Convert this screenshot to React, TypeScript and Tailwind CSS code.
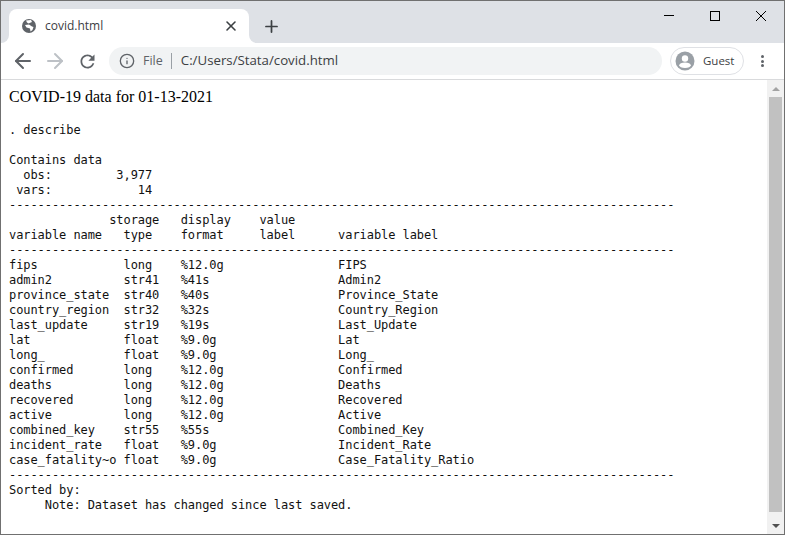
import { X, Plus, ArrowLeft, ArrowRight, Info } from 'lucide-react';

const dashes = '-'.repeat(93);

const output = `. describe

Contains data
  obs:         3,977
 vars:            14
${dashes}
              storage   display    value
variable name   type    format     label      variable label
${dashes}
fips            long    %12.0g                FIPS
admin2          str41   %41s                  Admin2
province_state  str40   %40s                  Province_State
country_region  str32   %32s                  Country_Region
last_update     str19   %19s                  Last_Update
lat             float   %9.0g                 Lat
long_           float   %9.0g                 Long_
confirmed       long    %12.0g                Confirmed
deaths          long    %12.0g                Deaths
recovered       long    %12.0g                Recovered
active          long    %12.0g                Active
combined_key    str55   %55s                  Combined_Key
incident_rate   float   %9.0g                 Incident_Rate
case_fatality~o float   %9.0g                 Case_Fatality_Ratio
${dashes}
Sorted by:
     Note: Dataset has changed since last saved.`;

function GlobeIcon() {
  return (
    <svg width="14" height="14" viewBox="0 0 14 14" className="shrink-0">
      <circle cx="7" cy="7" r="7" fill="#5f6368" />
      <path d="M4 1.5 L9 1 L10 3 L6.5 4.5 L5 3.5 Z" fill="#fff" />
      <path d="M3 6 L7 5.5 L10 7.5 L11.5 8 L10.5 11 L8.5 12.5 L8 9.5 L4.5 8.5 Z" fill="#fff" />
    </svg>
  );
}

function ProfileIcon() {
  return (
    <svg width="20" height="20" viewBox="0 0 20 20" className="shrink-0">
      <circle cx="10" cy="10" r="9.5" fill="#9aa0a6" />
      <circle cx="10" cy="7.5" r="3.2" fill="#fff" />
      <ellipse cx="10" cy="14.3" rx="5.8" ry="2.8" fill="#fff" />
    </svg>
  );
}

function ReloadIcon() {
  return (
    <svg width="21" height="21" viewBox="0 0 24 24" fill="#5f6368" className="ml-[10px] shrink-0">
      <path d="M17.65 6.35C16.2 4.9 14.21 4 12 4c-4.42 0-7.99 3.58-7.99 8s3.57 8 7.99 8c3.73 0 6.84-2.55 7.73-6h-2.08c-.82 2.33-3.04 4-5.65 4-3.31 0-6-2.69-6-6s2.69-6 6-6c1.66 0 3.14.69 4.22 1.78L13 11h7V4l-2.35 2.35z" />
    </svg>
  );
}

function TabStrip() {
  return (
    <div className="flex h-[42px] shrink-0 items-end bg-[#dee1e6]">
      <div className="relative ml-2 flex h-[34px] w-[240px] items-center rounded-t-lg bg-white pl-[13px] pr-[10px]">
        <span className="absolute -left-2 bottom-0 h-2 w-2 bg-white">
          <span className="block h-2 w-2 rounded-br-lg bg-[#dee1e6]" />
        </span>
        <span className="absolute -right-2 bottom-0 h-2 w-2 bg-white">
          <span className="block h-2 w-2 rounded-bl-lg bg-[#dee1e6]" />
        </span>
        <GlobeIcon />
        <span className="ml-[9px] flex-1 font-['Open_Sans',sans-serif] text-xs text-[#3c4043]">covid.html</span>
        <X size={16} strokeWidth={2.4} className="text-[#3c4043]" />
      </div>
      <div className="ml-[13px] flex h-[34px] items-center">
        <Plus size={19} strokeWidth={2.2} className="text-[#3c4043]" />
      </div>
      <div className="mb-auto ml-auto flex h-[29px] items-center text-black">
        <div className="flex w-[46px] justify-center">
          <div className="h-px w-[10px] bg-black" />
        </div>
        <div className="flex w-[46px] justify-center">
          <div className="h-[10px] w-[10px] border border-black" />
        </div>
        <div className="flex w-[46px] justify-center">
          <svg width="10" height="10" viewBox="0 0 10 10" stroke="#000" strokeWidth="1">
            <path d="M0 0 L10 10 M10 0 L0 10" />
          </svg>
        </div>
      </div>
    </div>
  );
}

function Toolbar() {
  return (
    <div className="flex h-[37px] shrink-0 items-center border-b border-[#d9dadc] bg-white">
      <div className="flex w-[108px] items-center pl-[10px]">
        <ArrowLeft size={24} strokeWidth={2} className="text-[#5f6368]" />
        <ArrowRight size={24} strokeWidth={2} className="ml-[8px] text-[#bdc1c6]" />
        <ReloadIcon />
      </div>
      <div className="flex h-[28px] w-[553px] items-center rounded-full bg-[#f1f3f4] pl-[10px] font-['Open_Sans',sans-serif] text-[12.5px]">
        <Info size={16} strokeWidth={2} className="text-[#5f6368]" />
        <span className="ml-[8px] text-[#5f6368]">File</span>
        <span className="ml-[8px] h-[16px] w-px bg-[#9aa0a6]" />
        <span className="ml-[9px] text-[13.25px] text-[#3c4043]">C:/Users/Stata/covid.html</span>
      </div>
      <div className="ml-2 flex h-[28px] w-[74px] items-center rounded-full border border-[#dfe1e5] pl-[4px] font-['Open_Sans',sans-serif] text-[11.5px] text-[#3c4043]">
        <ProfileIcon />
        <span className="ml-[8px]">Guest</span>
      </div>
      <div className="ml-[17px] flex flex-col gap-[1.5px]">
        <span className="h-[3px] w-[3px] rounded-full bg-[#5f6368]" />
        <span className="h-[3px] w-[3px] rounded-full bg-[#5f6368]" />
        <span className="h-[3px] w-[3px] rounded-full bg-[#5f6368]" />
      </div>
    </div>
  );
}

function Scrollbar() {
  return (
    <div className="flex w-[17px] shrink-0 flex-col bg-[#f1f1f1]">
      <div className="flex h-[17px] shrink-0 items-center justify-center">
        <div className="h-0 w-0 border-x-[4px] border-b-[4px] border-x-transparent border-b-[#a3a3a3]" />
      </div>
      <div className="mx-[2px] h-[415px] bg-[#c1c1c1]" />
      <div className="mt-auto flex h-[17px] shrink-0 items-center justify-center">
        <div className="h-0 w-0 border-x-[4px] border-t-[4px] border-x-transparent border-t-[#505050]" />
      </div>
    </div>
  );
}

export default function App() {
  return (
    <div className="flex h-[535px] w-[785px] flex-col overflow-hidden border border-[#707070] bg-white">
      <TabStrip />
      <Toolbar />
      <div className="flex min-h-0 flex-1">
        <div className="min-w-0 flex-1 overflow-hidden pl-2 pt-2">
          <h1 className="font-['Liberation_Serif',serif] text-base leading-[18px] text-black">COVID-19 data for 01-13-2021</h1>
          <pre className="mt-[17px] font-['DejaVu_Sans_Mono',monospace] text-xs leading-[15px] tracking-[-0.07px] text-[#111]">{output}</pre>
        </div>
        <Scrollbar />
      </div>
    </div>
  );
}
